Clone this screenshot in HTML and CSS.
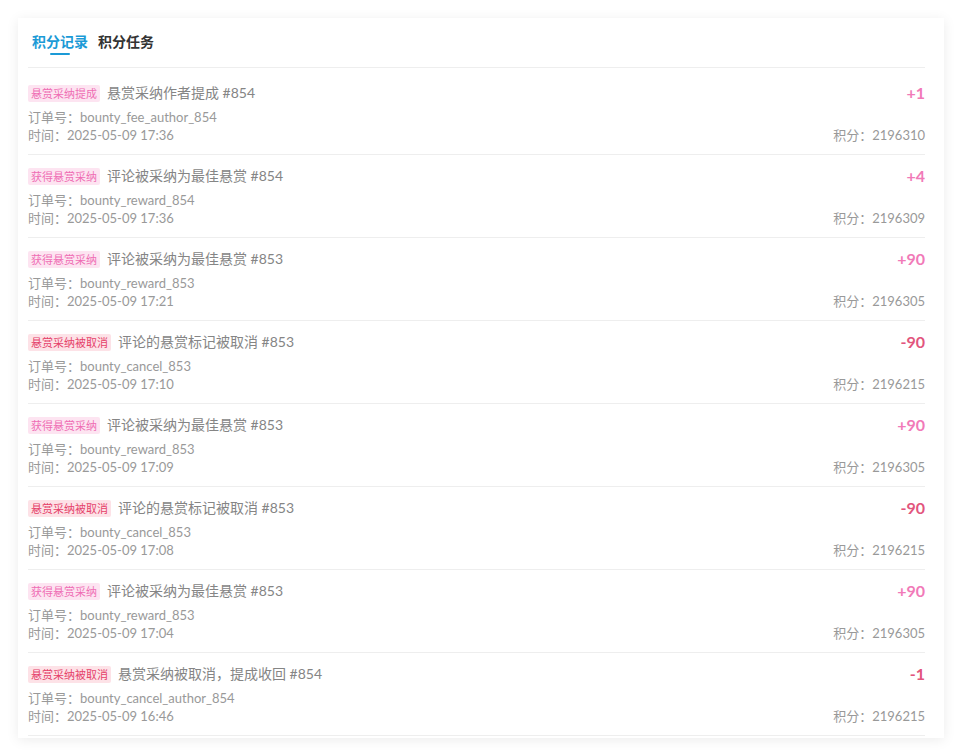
FILE: index.html
```html
<html>
  <head>
    <title>积分记录</title>
    <link rel="stylesheet" href="styles.css">
  </head>
  <body>
    <div class="card">
      <div class="tabs">
        <div class="tab active">积分记录</div>
        <div class="tab">积分任务</div>
      </div>
      <div class="list">
        <div class="row">
          <div class="line top">
            <div class="title"><span class="tag pink">悬赏采纳提成</span>悬赏采纳作者提成 #854</div>
            <div class="amount plus">+1</div>
          </div>
          <div class="line">订单号：bounty_fee_author_854</div>
          <div class="line">
            <div>时间：2025-05-09 17:36</div>
            <div>积分：2196310</div>
          </div>
        </div>
        <div class="row">
          <div class="line top">
            <div class="title"><span class="tag pink">获得悬赏采纳</span>评论被采纳为最佳悬赏 #854</div>
            <div class="amount plus">+4</div>
          </div>
          <div class="line">订单号：bounty_reward_854</div>
          <div class="line">
            <div>时间：2025-05-09 17:36</div>
            <div>积分：2196309</div>
          </div>
        </div>
        <div class="row">
          <div class="line top">
            <div class="title"><span class="tag pink">获得悬赏采纳</span>评论被采纳为最佳悬赏 #853</div>
            <div class="amount plus">+90</div>
          </div>
          <div class="line">订单号：bounty_reward_853</div>
          <div class="line">
            <div>时间：2025-05-09 17:21</div>
            <div>积分：2196305</div>
          </div>
        </div>
        <div class="row">
          <div class="line top">
            <div class="title"><span class="tag red">悬赏采纳被取消</span>评论的悬赏标记被取消 #853</div>
            <div class="amount minus">-90</div>
          </div>
          <div class="line">订单号：bounty_cancel_853</div>
          <div class="line">
            <div>时间：2025-05-09 17:10</div>
            <div>积分：2196215</div>
          </div>
        </div>
        <div class="row">
          <div class="line top">
            <div class="title"><span class="tag pink">获得悬赏采纳</span>评论被采纳为最佳悬赏 #853</div>
            <div class="amount plus">+90</div>
          </div>
          <div class="line">订单号：bounty_reward_853</div>
          <div class="line">
            <div>时间：2025-05-09 17:09</div>
            <div>积分：2196305</div>
          </div>
        </div>
        <div class="row">
          <div class="line top">
            <div class="title"><span class="tag red">悬赏采纳被取消</span>评论的悬赏标记被取消 #853</div>
            <div class="amount minus">-90</div>
          </div>
          <div class="line">订单号：bounty_cancel_853</div>
          <div class="line">
            <div>时间：2025-05-09 17:08</div>
            <div>积分：2196215</div>
          </div>
        </div>
        <div class="row">
          <div class="line top">
            <div class="title"><span class="tag pink">获得悬赏采纳</span>评论被采纳为最佳悬赏 #853</div>
            <div class="amount plus">+90</div>
          </div>
          <div class="line">订单号：bounty_reward_853</div>
          <div class="line">
            <div>时间：2025-05-09 17:04</div>
            <div>积分：2196305</div>
          </div>
        </div>
        <div class="row">
          <div class="line top">
            <div class="title"><span class="tag red">悬赏采纳被取消</span>悬赏采纳被取消，提成收回 #854</div>
            <div class="amount minus">-1</div>
          </div>
          <div class="line">订单号：bounty_cancel_author_854</div>
          <div class="line">
            <div>时间：2025-05-09 16:46</div>
            <div>积分：2196215</div>
          </div>
        </div>
      </div>
    </div>
  </body>
</html>
```

FILE: styles.css
```css
body {
  margin: 0;
  background: #fff;
  font-family: "Lato", "Noto Sans CJK SC", sans-serif;
}
.card {
  margin: 18px 18px 0 18px;
  padding: 14px 19px 2px 10px;
  background: #fff;
  box-shadow: 0 2px 12px rgba(0, 0, 0, 0.08);
}
.tabs {
  display: flex;
  gap: 10px;
  padding: 0 0 15px 4px;
  border-bottom: 1px solid #eee;
}
.tab {
  position: relative;
  font-size: 14px;
  font-weight: bold;
  line-height: 20px;
  color: #333;
}
.tab.active {
  color: #1b9ad6;
}
.tab.active:after {
  content: "";
  position: absolute;
  left: 18px;
  bottom: -3px;
  width: 20px;
  height: 2px;
  border-radius: 1px;
  background: #1b9ad6;
}
.list {
  padding-top: 4px;
}
.row {
  padding: 10px 0;
  border-bottom: 1px solid #eee;
  font-size: 13px;
  color: #999;
}
.line {
  display: flex;
  justify-content: space-between;
  line-height: 18px;
}
.line.top {
  align-items: center;
  height: 22px;
  margin-bottom: 4px;
}
.title {
  display: flex;
  align-items: center;
  font-size: 14px;
  color: #858585;
}
.tag {
  display: inline-block;
  margin-right: 7px;
  padding: 0 3px;
  font-size: 11px;
  line-height: 17px;
  border-radius: 2px;
}
.tag.pink {
  background: #fde4f1;
  color: #ef6db4;
}
.tag.red {
  background: #fde2e7;
  color: #e5416a;
}
.amount {
  font-size: 16px;
  font-weight: bold;
}
.amount.plus {
  color: #f17ab8;
}
.amount.minus {
  color: #e2557d;
}
```
